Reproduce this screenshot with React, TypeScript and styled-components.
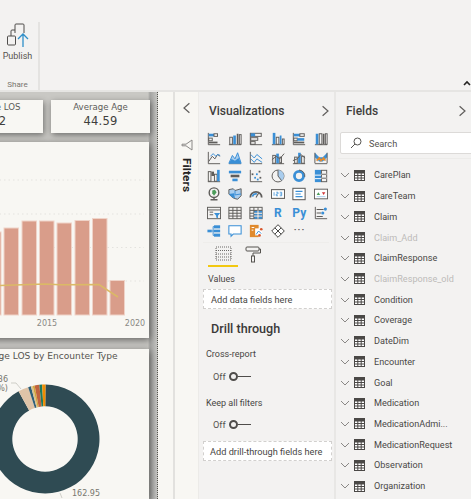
import React from 'react';
import styled, { createGlobalStyle } from 'styled-components';

const GlobalStyle = createGlobalStyle`
  html, body { margin: 0; padding: 0; width: 471px; height: 499px; overflow: hidden; background: #f3f2f1; }
  #root { width: 471px; height: 499px; }
  * { box-sizing: border-box; }
`;

const G = '#5f5d5b';
const B = '#3a8fd6';
const LB = '#a9cdee';

const Page = styled.div`
  width: 471px;
  height: 499px;
  display: flex;
  flex-direction: column;
  overflow: hidden;
  font-family: Roboto, 'Noto Sans', sans-serif;
  color: #3b3a39;
`;

const Ribbon = styled.div`
  height: 92px;
  flex: none;
  display: flex;
  background: #f3f2f1;
  border-bottom: 2px solid #e6e5e3;
  padding-top: 22px;
  position: relative;
`;

const RibbonGroup = styled.div`
  width: 40px;
  border-right: 2px solid #e4e3e1;
  display: flex;
  flex-direction: column;
  align-items: center;
  padding-right: 3px;
`;

const RibbonLabel = styled.div`
  font-size: 9px;
  line-height: 12px;
  color: #55534f;
  margin-top: 2px;
`;

const GroupName = styled.div`
  font-size: 8px;
  line-height: 12px;
  color: #77756f;
  margin-top: auto;
  margin-bottom: -1px;
`;

const Collapse = styled.svg`
  position: absolute;
  right: 0;
  bottom: 3px;
`;

const Body = styled.div`
  flex: 1;
  display: flex;
  min-height: 0;
`;

const Canvas = styled.div`
  width: 158px;
  flex: none;
  background: linear-gradient(90deg, #c9c8c4 0, #c9c8c4 148px, #a3a3a1 150px, #c4c4c1 157px);
  border-right: 1px dotted #55554f;
  overflow: hidden;
  padding-top: 8px;
  display: flex;
  flex-direction: column;
`;

const KpiRow = styled.div`
  display: flex;
  gap: 8px;
  margin-left: -57px;
`;

const Kpi = styled.div<{ $w: number }>`
  width: ${(p) => p.$w}px;
  height: 33px;
  background: #f8f7f3;
  box-shadow: 1px 2px 6px rgba(0, 0, 0, 0.45);
  text-align: center;
  font-family: 'DejaVu Sans', sans-serif;
  color: #5c5b58;
`;

const KpiTitle = styled.div`
  font-size: 8.6px;
  line-height: 11px;
  margin-top: 2px;
`;

const KpiValue = styled.div`
  font-size: 11.5px;
  line-height: 16px;
  color: #3f3f3d;
  letter-spacing: 0.2px;
`;

const ChartCard = styled.div<{ $h: number; $mt: number }>`
  width: 208px;
  height: ${(p) => p.$h}px;
  margin-top: ${(p) => p.$mt}px;
  margin-left: -59px;
  flex: none;
  background: #f8f7f3;
  box-shadow: 1px 2px 7px rgba(0, 0, 0, 0.5);
  font-family: 'DejaVu Sans', sans-serif;
`;

const ChartTitle = styled.div`
  font-size: 9.1px;
  line-height: 12px;
  padding-top: 1px;
  text-align: center;
  color: #55544f;
`;

const Plot = styled.svg`
  display: block;
  font-family: 'DejaVu Sans', sans-serif;
`;

const Gutter = styled.div`
  width: 17px;
  flex: none;
  background: #f8f7f3;
  border-right: 2px solid #e2e1de;
`;

const FilterPane = styled.div`
  width: 24px;
  flex: none;
  background: #f8f7f3;
  border-right: 1px solid #ecebe8;
  display: flex;
  flex-direction: column;
  align-items: center;
  padding-top: 10px;
`;

const FiltersLabel = styled.div`
  writing-mode: vertical-rl;
  font-size: 11.8px;
  font-weight: 700;
  color: #252423;
  margin-top: 7px;
  line-height: 14px;
  letter-spacing: 0.1px;
`;

const VizPane = styled.div`
  width: 137px;
  flex: none;
  background: #f3f2f1;
  border-right: 2px solid #e8e7e5;
  display: flex;
  flex-direction: column;
  padding-left: 4px;
`;

const PaneHeader = styled.div<{ $pad: number }>`
  display: flex;
  align-items: center;
  justify-content: space-between;
  height: 20px;
  margin-top: 9px;
  padding-left: ${(p) => p.$pad}px;
  padding-right: 3px;
`;

const PaneTitle = styled.div`
  font-size: 12px;
  font-weight: 500;
  color: #3f3e3c;
  line-height: 20px;
`;

const VizGrid = styled.div`
  display: grid;
  grid-template-columns: repeat(6, 21.4px);
  grid-auto-rows: 18.4px;
  margin-top: 9px;
  justify-items: center;
  align-items: center;
`;

const ScriptIcon = styled.div<{ $size: number }>`
  font-size: ${(p) => p.$size}px;
  font-weight: 700;
  color: ${B};
  line-height: 14px;
`;

const More = styled.div`
  font-size: 13px;
  color: #605e5c;
  line-height: 10px;
  letter-spacing: 0.5px;
  margin-top: -3px;
`;

const TabRow = styled.div`
  display: flex;
  margin-top: 2px;
  padding-left: 5px;
  border-top: 1px solid #eeedeb;
  padding-top: 2px;
  margin-right: 5px;
`;

const Tab = styled.div<{ $active?: boolean }>`
  width: 30px;
  height: 22px;
  display: flex;
  justify-content: center;
  padding-top: 1px;
  border-bottom: 2px solid ${(p) => (p.$active ? '#f2c811' : 'transparent')};
`;

const SmallLabel = styled.div<{ $mt: number; $pl: number }>`
  font-size: 9px;
  line-height: 12px;
  color: #484644;
  margin-top: ${(p) => p.$mt}px;
  padding-left: ${(p) => p.$pl}px;
`;

const Well = styled.div<{ $mt: number; $h: number; $pl: number }>`
  width: 129px;
  height: ${(p) => p.$h}px;
  margin-top: ${(p) => p.$mt}px;
  padding-left: ${(p) => p.$pl}px;
  background: #fff;
  border: 1px dashed #d2d0ce;
  font-size: 9.2px;
  white-space: nowrap;
  display: flex;
  align-items: center;
  color: #484644;
`;

const SectionTitle = styled.div`
  font-size: 12.6px;
  font-weight: 500;
  color: #3b3a39;
  line-height: 16px;
  margin-top: 12px;
  padding-left: 8px;
`;

const ToggleRow = styled.div<{ $mt: number }>`
  display: flex;
  align-items: center;
  margin-top: ${(p) => p.$mt}px;
  padding-left: 10px;
  height: 12px;
  font-size: 9.2px;
  color: #55534f;
`;

const Knob = styled.span`
  width: 9px;
  height: 9px;
  border: 2px solid #4f4d4b;
  border-radius: 50%;
  margin-left: 3px;
`;

const Track = styled.span`
  width: 13px;
  height: 1px;
  background: #4f4d4b;
`;

const FieldsPane = styled.div`
  flex: 1;
  min-width: 0;
  background: #f3f2f1;
  display: flex;
  flex-direction: column;
  padding-left: 4px;
`;

const SearchBox = styled.div`
  height: 22px;
  width: 140px;
  margin-top: 11px;
  flex: none;
  background: #fff;
  border: 1px solid #dcdad8;
  border-radius: 2px;
  display: flex;
  align-items: center;
  padding-left: 9px;
  gap: 7px;
  font-size: 9.2px;
  color: #55534f;
`;

const FieldList = styled.div`
  display: flex;
  flex-direction: column;
  margin-top: 4px;
  border-top: 1px solid #ecebe9;
  padding-top: 6px;
  margin-left: -2px;
`;

const FieldRow = styled.div<{ $muted?: boolean }>`
  height: 20.73px;
  flex: none;
  display: flex;
  align-items: center;
  padding-left: 2px;
  font-size: 9.1px;
  color: ${(p) => (p.$muted ? '#bdbbb9' : '#4a4846')};
`;

const FieldName = styled.span`
  margin-left: 9px;
`;

const Chevron = ({ dir, size = 10, color = '#605e5c' }: { dir: 'left' | 'right' | 'down'; size?: number; color?: string }) => {
  const d = dir === 'left' ? 'M7 1 2.5 5 7 9' : dir === 'right' ? 'M3 1 7.5 5 3 9' : 'M1 3 5 7 9 3';
  return (
    <svg width={size} height={size} viewBox="0 0 10 10" fill="none" stroke={color} strokeWidth="1">
      <path d={d} />
    </svg>
  );
};

const TableIcon = () => (
  <svg width="11" height="11" viewBox="0 0 11 11" fill="none" stroke="#4a4846" strokeWidth="1" style={{ marginLeft: 4, flex: 'none' }}>
    <rect x="0.5" y="0.5" width="10" height="10" fill="#fff" />
    <rect x="0.5" y="0.5" width="10" height="2.5" fill="#4a4846" />
    <path d="M0 5.5h11M0 8h11M3.8 3v8M7.2 3v8" />
  </svg>
);

const Ic = ({ children }: { children: React.ReactNode }) => (
  <svg width="14" height="14" viewBox="0 0 16 16" fill="none" stroke={G} strokeWidth="1.1">
    {children}
  </svg>
);

const R = ({ x, y, w, h, c = B, o }: { x: number; y: number; w: number; h: number; c?: string; o?: boolean }) => (
  <rect x={x} y={y} width={w} height={h} fill={o ? 'none' : c} stroke={o ? c : 'none'} />
);

const axis = <path d="M1.5 1v13.5H15" />;
const vAxis = <path d="M1 14.5h14" />;

const vizIcons: React.ReactNode[] = [
  <Ic>{axis}<R x={2} y={2} w={6} h={3} /><R x={8} y={2} w={4} h={3} c={G} o /><R x={2} y={7} w={4} h={3} c={G} o /><R x={2} y={11} w={10} h={2} c={G} /></Ic>,
  <Ic>{vAxis}<R x={2} y={6} w={3} h={8} c={G} o /><R x={6} y={4} w={3} h={10} /><R x={10} y={2} w={2} h={12} c={G} /><R x={13} y={3} w={2} h={11} c={G} o /></Ic>,
  <Ic>{axis}<R x={2} y={1.5} w={12} h={3.5} c={G} o /><R x={2} y={1.5} w={5} h={3.5} /><R x={2} y={6.5} w={8} h={3} c={G} o /><R x={2} y={11} w={5} h={3} c={G} o /></Ic>,
  <Ic>{vAxis}<R x={2} y={1} w={3} h={13} /><R x={6} y={6} w={3} h={8} c={G} o /><R x={10} y={4} w={2} h={10} /><R x={13} y={8} w={2} h={6} c={G} o /></Ic>,
  <Ic>{axis}<R x={2} y={2} w={7} h={3} /><R x={9} y={2} w={5} h={3} c={G} o /><R x={2} y={7} w={4} h={3} c={G} o /><R x={6} y={7} w={8} h={3} /><R x={2} y={11} w={12} h={2} c={G} /></Ic>,
  <Ic>{vAxis}<R x={2} y={2} w={3} h={12} /><R x={6} y={2} w={3} h={12} c={G} o /><R x={10} y={2} w={2} h={12} c={G} /><R x={13} y={2} w={2} h={12} c={G} o /></Ic>,
  <Ic>{axis}<path d="M2 12 6 6l3 3 3-5 3 2" /><path d="M4 6 7 3l3 3 2-2 3 1" stroke={B} /></Ic>,
  <Ic>{vAxis}<path d="M1 14 5 5l3 4 3-7 4 12z" fill={LB} stroke={B} /><path d="M1 14 4 9l4 2 4-3 3 6z" fill={B} stroke="none" /></Ic>,
  <Ic>{axis}<path d="M2 4 6 8l3-4 6 5" stroke={B} /><path d="M2 9 6 13l3-4 6 4" stroke={B} /></Ic>,
  <Ic>{vAxis}<R x={2} y={5} w={3} h={9} c={G} o /><R x={6} y={3} w={3} h={11} /><R x={10} y={7} w={2} h={7} c={G} o /><path d="M1 10 6 6l4 3 5-6" stroke={G} /></Ic>,
  <Ic>{vAxis}<R x={3} y={7} w={3} h={7} c={G} o /><R x={7} y={2} w={3} h={12} /><R x={11} y={6} w={3} h={8} c={G} o /><path d="M1 11 6 9l4-5 5 4" stroke={G} /></Ic>,
  <Ic>{vAxis}<path d="M1 2 6 7 10 7 15 2v5l-5 5H6L1 7z" fill={B} stroke="none" /><path d="M3 11 6 8l2 3 3-3 2 3" stroke="#e08a2e" strokeWidth="2" /><path d="M1 2v12M15 2v12" /></Ic>,
  <Ic>{vAxis}<R x={1.5} y={3} w={3} h={11} c={G} o /><R x={5} y={3} w={3} h={5} c={G} /><R x={8.5} y={6} w={3} h={8} c={G} o /><R x={11.5} y={1} w={3} h={13} /></Ic>,
  <Ic><path d="M1 2h14v3H1z" fill={B} stroke="none" /><path d="M3 6.5h10v3H3z" fill={G} stroke="none" /><path d="M5 11h6v3H5z" fill={B} stroke="none" /></Ic>,
  <Ic>{axis}<g fill={G} stroke="none"><rect x="3" y="5" width="2" height="2" /><rect x="11" y="2" width="2" height="2" /><rect x="12" y="9" width="2" height="2" /></g><g fill={B} stroke="none"><rect x="6" y="9" width="2" height="2" /><rect x="8" y="5" width="2" height="2" /><rect x="9" y="11" width="2" height="2" /></g></Ic>,
  <Ic><circle cx="8" cy="8" r="6.8" stroke={G} /><path d="M8 8V1.2A6.8 6.8 0 0 1 14.8 8 6.8 6.8 0 0 1 12 13.6z" fill={LB} stroke="none" /><path d="M8 8V1.2M8 8l4.2 5.4" stroke={G} /></Ic>,
  <Ic><circle cx="8" cy="8" r="5.2" stroke={B} strokeWidth="3.2" /><path d="M8 1.2A6.8 6.8 0 0 1 14.6 9" stroke={G} /></Ic>,
  <Ic><R x={1} y={1} w={7} h={14} /><R x={8.5} y={1.5} w={6} h={13} c={G} o /><path d="M8 6h7M8 10.5h7M1 7h7M1 11h7" stroke="#fff" /><path d="M8.5 6h6M8.5 10.5h6" stroke={G} /></Ic>,
  <Ic><circle cx="8" cy="6.5" r="5.5" stroke={G} strokeWidth="1.6" /><path d="M6 4 9 3 11 6 8 10 6 7z" fill="#4c9c5a" stroke="none" /><path d="M8 12v2M4 14.5h8" strokeWidth="1.6" /></Ic>,
  <Ic><path d="M1 3 6 2 8 4 15 2v8l-4 4-4-1-3-2-3-3z" fill={LB} stroke={G} /><path d="M1 8 7 7 8 13 4 11z" fill={B} stroke="none" /><path d="M8 4v5l7-1" stroke={B} /></Ic>,
  <Ic><path d="M1.5 12A6.5 6.5 0 0 1 14.5 12" strokeWidth="2" /><path d="M4 11a4 4 0 0 1 5-3" stroke={B} strokeWidth="2" /><path d="M8 12 11 7" strokeWidth="1.2" /></Ic>,
  <Ic><rect x="0.5" y="3" width="15" height="10" fill="#fff" stroke={G} strokeWidth="1.2" /><path d="M3.5 6v4M6 6h2v2H6v2h2M10 6h2.2v4H10M10 8h2" stroke={B} strokeWidth="0.9" /></Ic>,
  <Ic><rect x="1" y="1.5" width="14" height="13" fill="#fff" stroke={G} strokeWidth="1.2" /><path d="M4 5h8M4 8h6M4 11h8" stroke={B} strokeWidth="1.4" /></Ic>,
  <Ic><rect x="0.5" y="2.5" width="15" height="11" fill="#fff" stroke={G} /><path d="M3 9l2-3 2 3z" fill="#4c9c5a" stroke="none" /><path d="M9 6h4l-2 3z" fill="#d13438" stroke="none" /><path d="M3 11h10" stroke={LB} /></Ic>,
  <Ic><rect x="0.5" y="1.5" width="15" height="13" stroke={G} /><path d="M0.5 4.5h15M3 7h4M3 10h4" /><path d="M8 8h7l-2.5 3v3l-2-1v-2z" fill={B} stroke="none" /></Ic>,
  <Ic><rect x="1" y="1.5" width="14" height="13" /><path d="M1 5h14M1 8.3h14M1 11.5h14M5.6 1.5v13M10.3 1.5v13" /></Ic>,
  <Ic><rect x="1" y="1.5" width="14" height="13" /><R x={5.6} y={5} w={9.4} h={9.5} /><path d="M1 5h14M1 8.3h14M1 11.5h14M5.6 1.5v13M10.3 1.5v13" stroke={G} /><path d="M5.6 8.3h9.4M5.6 11.5h9.4M10.3 5v9.5" stroke="#fff" /></Ic>,
  <ScriptIcon $size={12}>R</ScriptIcon>,
  <ScriptIcon $size={12}>Py</ScriptIcon>,
  <Ic>{axis}<path d="M3 4h8M3 8h5M3 12h7" strokeWidth="1.2" /><circle cx="13" cy="3.5" r="1.8" fill={B} stroke="none" /><circle cx="10" cy="8" r="1.8" fill={B} stroke="none" /></Ic>,
  <Ic><R x={0.5} y={6.5} w={5} h={3} /><R x={8} y={1.5} w={7} h={3.5} /><R x={8} y={6.5} w={7} h={3} /><R x={8} y={11} w={7} h={3.5} /><path d="M5.5 8h2.5M7 3v10h1M7 3h1" stroke={B} /></Ic>,
  <Ic><path d="M1 2h14v9.5H6L3.5 14v-2.5H1z" fill="#fff" stroke={B} strokeWidth="1.2" /></Ic>,
  <Ic><R x={1} y={1} w={10} h={14} c="#e08a2e" /><path d="M3 4h3M3 7h2" stroke="#fff" /><R x={7} y={5} w={8} h={8} c="#fff" /><path d="M8 12l3-4 3 3" stroke={B} /><circle cx="14" cy="6" r="1.5" fill="#d8562c" stroke="none" /><circle cx="12" cy="13" r="1.5" fill="#d8562c" stroke="none" /></Ic>,
  <Ic><path d="M8 .8 15.2 8 8 15.2.8 8z" fill="#fff" stroke="#3f3e3c" /><path d="M4.4 4.4l7.2 7.2M11.6 4.4l-7.2 7.2" stroke="#3f3e3c" /></Ic>,
  <More>···</More>,
];

const fields: { name: string; muted?: boolean }[] = [
  { name: 'CarePlan' },
  { name: 'CareTeam' },
  { name: 'Claim' },
  { name: 'Claim_Add', muted: true },
  { name: 'ClaimResponse' },
  { name: 'ClaimResponse_old', muted: true },
  { name: 'Condition' },
  { name: 'Coverage' },
  { name: 'DateDim' },
  { name: 'Encounter' },
  { name: 'Goal' },
  { name: 'Medication' },
  { name: 'MedicationAdmi...' },
  { name: 'MedicationRequest' },
  { name: 'Observation' },
  { name: 'Organization' },
];

const bars = [
  { x: -14, w: 15, top: 232 },
  { x: 4, w: 14.5, top: 228 },
  { x: 22, w: 14.5, top: 221 },
  { x: 39.5, w: 14.5, top: 221 },
  { x: 57, w: 14.5, top: 223 },
  { x: 75, w: 14.5, top: 220.5 },
  { x: 92.5, w: 14.5, top: 218.5 },
  { x: 110, w: 14.5, top: 280.5 },
];

// bar chart plot is drawn in page coordinates, card starts at y=142
const BarPlot = () => (
  <Plot width="208" height="196" viewBox="-59 142 208 196">
    {[180, 214, 247.5, 281].map((y) => (
      <line key={y} x1="-59" x2="144" y1={y} y2={y} stroke="#e4e3df" strokeWidth="1" strokeDasharray="1.5 3" />
    ))}
    {bars.map((b) => (
      <rect key={b.x} x={b.x} y={b.top} width={b.w} height={315 - b.top} fill="#d99d8a" stroke="#efd3c8" strokeWidth="1" />
    ))}
    <polyline points="-59,287 0,285.5 30,284.5 45,284 60,284.8 99,284.5 118,297" fill="none" stroke="#dbb966" strokeWidth="1.5" />
    <text x="47" y="325.5" textAnchor="middle" fontSize="8" fill="#8a8985">2015</text>
    <text x="135" y="325.5" textAnchor="middle" fontSize="8" fill="#8a8985">2020</text>
  </Plot>
);

const polar = (a: number, r: number) => {
  const t = ((a - 90) * Math.PI) / 180;
  return [45 + r * Math.cos(t), 440 + r * Math.sin(t)];
};

const arc = (from: number, to: number) => {
  const [x1, y1] = polar(from, 54.5);
  const [x2, y2] = polar(to, 54.5);
  const [x3, y3] = polar(to, 32.7);
  const [x4, y4] = polar(from, 32.7);
  const large = to - from > 180 ? 1 : 0;
  return `M${x1} ${y1}A54.5 54.5 0 ${large} 1 ${x2} ${y2}L${x3} ${y3}A32.7 32.7 0 ${large} 0 ${x4} ${y4}Z`;
};

const slices = [
  { from: 0.5, to: 331, c: '#2f4b53' },
  { from: 331, to: 342, c: '#dfc4a8' },
  { from: 342, to: 345, c: '#2f5f78' },
  { from: 345, to: 347, c: '#d9c08c' },
  { from: 347, to: 349, c: '#d3a53b' },
  { from: 349, to: 354, c: '#c0633f' },
  { from: 354, to: 357, c: '#1f7a5c' },
  { from: 357, to: 360.5, c: '#f08c00' },
];

// card starts at y=349, drawn in page coordinates under the title
const DonutPlot = () => (
  <Plot width="208" height="136" viewBox="-59 363 208 136">
    {slices.map((s) => (
      <path key={s.c} d={arc(s.from, s.to)} fill={s.c} />
    ))}
    <text x="8" y="383" textAnchor="end" fontSize="8" fill="#77766f">7.36</text>
    <text x="8" y="392" textAnchor="end" fontSize="8" fill="#77766f">(4.5%)</text>
    <path d="M11 384h5l5 6" fill="none" stroke="#bdbcb6" strokeWidth="0.7" />
    <path d="M60 494l2 5" fill="none" stroke="#bdbcb6" strokeWidth="0.7" />
    <text x="72" y="497" fontSize="8" fill="#77766f">162.95</text>
  </Plot>
);

export default function App() {
  return (
    <Page>
      <GlobalStyle />
      <Ribbon>
        <RibbonGroup>
          <svg width="22" height="26" viewBox="0 0 22 26" fill="none" stroke="#4f4d4b" strokeWidth="1">
            <rect x="0.5" y="14" width="8" height="9" rx="1" />
            <path d="M4 14V9a1 1 0 0 1 1-1h3V3a1 1 0 0 1 1-1h7a1 1 0 0 1 1 1v8" />
            <path d="M8 8v3" />
            <path d="M16 25V12M11 17l5-5 5 5" stroke="#2f8fc9" strokeWidth="1.3" />
          </svg>
          <RibbonLabel>Publish</RibbonLabel>
          <GroupName>Share</GroupName>
        </RibbonGroup>
        <Collapse width="8" height="8" viewBox="0 0 8 8" fill="none" stroke="#252423" strokeWidth="1.6">
          <path d="M1 6 4 3l3 3" />
        </Collapse>
      </Ribbon>
      <Body>
        <Canvas>
          <KpiRow>
            <Kpi $w={100}>
              <KpiTitle>Average LOS</KpiTitle>
              <KpiValue>8.72</KpiValue>
            </Kpi>
            <Kpi $w={99}>
              <KpiTitle>Average Age</KpiTitle>
              <KpiValue>44.59</KpiValue>
            </Kpi>
          </KpiRow>
          <ChartCard $h={196} $mt={9}>
            <BarPlot />
          </ChartCard>
          <ChartCard $h={150} $mt={11}>
            <ChartTitle>Average LOS by Encounter Type</ChartTitle>
            <DonutPlot />
          </ChartCard>
        </Canvas>
        <Gutter />
        <FilterPane>
          <Chevron dir="left" size={12} />
          <svg width="12" height="12" viewBox="0 0 12 12" fill="none" stroke="#8a8886" strokeWidth="1" style={{ marginTop: 25 }}>
            <path d="M11 1v10L5 6.8H1V5.2h4z" />
          </svg>
          <FiltersLabel>Filters</FiltersLabel>
        </FilterPane>
        <VizPane>
          <PaneHeader $pad={6}>
            <PaneTitle>Visualizations</PaneTitle>
            <Chevron dir="right" size={12} />
          </PaneHeader>
          <VizGrid>
            {vizIcons.map((icon, i) => (
              <React.Fragment key={i}>{icon}</React.Fragment>
            ))}
          </VizGrid>
          <TabRow>
            <Tab $active>
              <svg width="17" height="15" viewBox="0 0 17 15" fill="none" stroke="#6b6967" strokeWidth="1" strokeDasharray="1 1">
                <rect x="1" y="1" width="15" height="13" />
                <path d="M1 4.5h15M1 8h15M1 11h15" />
              </svg>
            </Tab>
            <Tab>
              <svg width="16" height="17" viewBox="0 0 16 17" fill="none" stroke="#55534f" strokeWidth="1">
                <rect x="1" y="1" width="13" height="4" rx="1" />
                <path d="M14 3h1.5v4H8v3" />
                <rect x="6.5" y="10" width="3" height="6" />
              </svg>
            </Tab>
          </TabRow>
          <SmallLabel $mt={6} $pl={5}>Values</SmallLabel>
          <Well $mt={4} $h={20} $pl={7}>Add data fields here</Well>
          <SectionTitle>Drill through</SectionTitle>
          <SmallLabel $mt={11} $pl={3}>Cross-report</SmallLabel>
          <ToggleRow $mt={10}>
            Off<Knob /><Track />
          </ToggleRow>
          <SmallLabel $mt={15} $pl={3}>Keep all filters</SmallLabel>
          <ToggleRow $mt={9}>
            Off<Knob /><Track />
          </ToggleRow>
          <Well $mt={11} $h={20} $pl={6}>Add drill-through fields here</Well>
        </VizPane>
        <FieldsPane>
          <PaneHeader $pad={6}>
            <PaneTitle>Fields</PaneTitle>
            <Chevron dir="right" size={12} />
          </PaneHeader>
          <SearchBox>
            <svg width="12" height="12" viewBox="0 0 12 12" fill="none" stroke="#55534f" strokeWidth="1">
              <circle cx="7.5" cy="4.5" r="3.5" />
              <path d="M5 7 1 11" />
            </svg>
            Search
          </SearchBox>
          <FieldList>
            {fields.map((f) => (
              <FieldRow key={f.name} $muted={f.muted}>
                <Chevron dir="down" size={10} color="#8a8886" />
                <TableIcon />
                <FieldName>{f.name}</FieldName>
              </FieldRow>
            ))}
          </FieldList>
        </FieldsPane>
      </Body>
    </Page>
  );
}
